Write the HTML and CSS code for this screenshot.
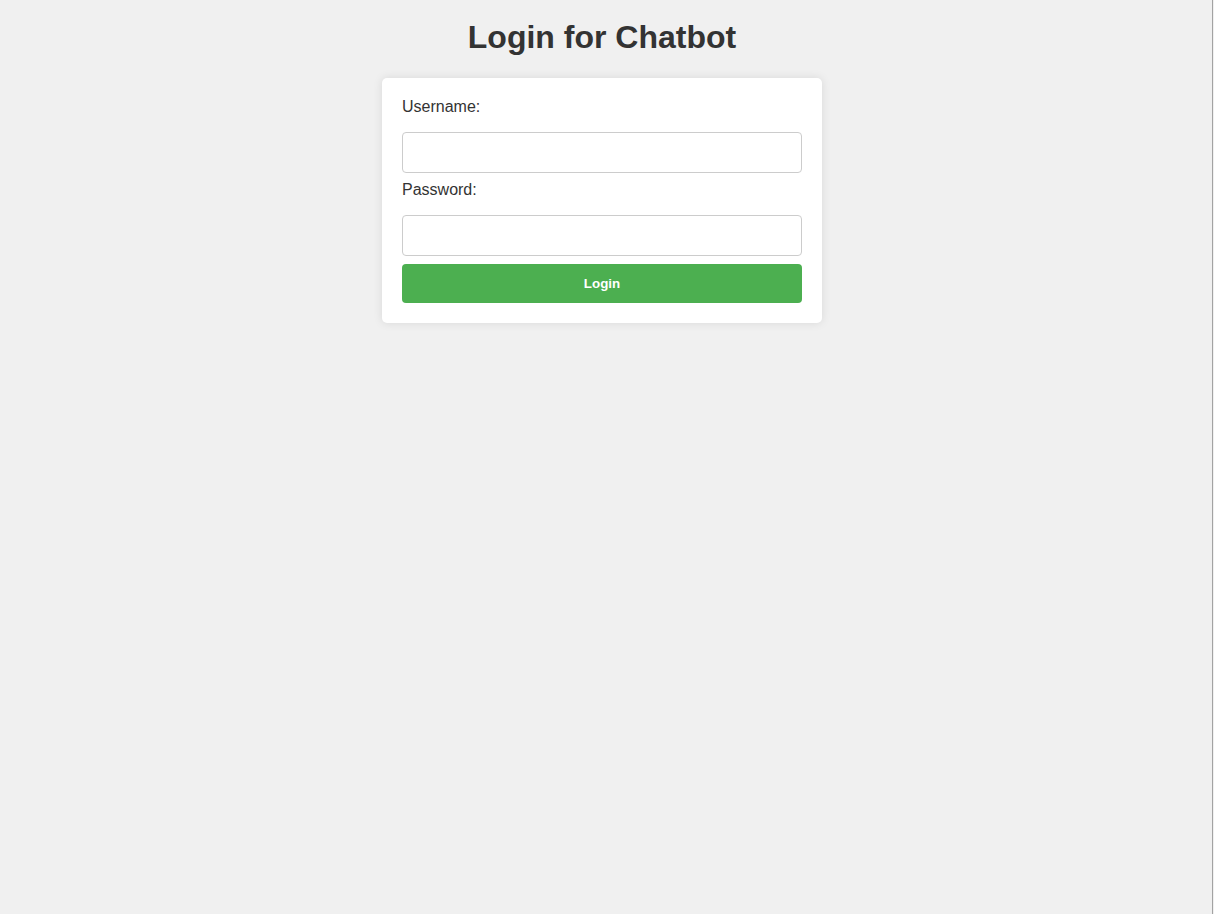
FILE: index.html
```html
<!DOCTYPE html>
<html lang="en">
<head>
<meta charset="utf-8">
<title>Login for Chatbot</title>
<link rel="stylesheet" href="styles.css">
</head>
<body>
  <h1 class="title">Login for Chatbot</h1>
  <form class="card">
    <label class="label" for="username">Username:</label>
    <input class="field" type="text" id="username" name="username">
    <label class="label" for="password">Password:</label>
    <input class="field" type="password" id="password" name="password">
    <button class="btn" type="submit">Login</button>
  </form>
</body>
</html>
```

FILE: styles.css
```css
html {
  background: #f0f0f0;
}

body {
  margin: 0 1px 0 0;
  min-height: 100vh;
  box-sizing: border-box;
  padding: 19px 8px 0 0;
  border-right: 1px solid #a3a3a3;
  font-family: "Liberation Sans", Arial, sans-serif;
  color: #333;
}

.title {
  margin: 0 0 22px;
  font-size: 32px;
  font-weight: bold;
  line-height: 37px;
  text-align: center;
  color: #333;
}

.card {
  width: 440px;
  box-sizing: border-box;
  margin: 0 auto;
  padding: 20px;
  background: #fff;
  border-radius: 5px;
  box-shadow: 0 0 10px rgba(0, 0, 0, 0.1);
  display: flex;
  flex-direction: column;
}

.label {
  font-size: 16px;
  line-height: 18px;
  margin: 0 0 16px;
  color: #333;
}

.field {
  box-sizing: border-box;
  width: 100%;
  height: 41px;
  margin: 0 0 8px;
  padding: 10px;
  border: 1px solid #ccc;
  border-radius: 4px;
  font-family: "Liberation Sans", Arial, sans-serif;
  font-size: 16px;
  background: #fff;
}

.btn {
  height: 39px;
  width: 100%;
  border: none;
  border-radius: 4px;
  background: #4caf50;
  color: #fff;
  font-family: "Liberation Sans", Arial, sans-serif;
  font-size: 13.33px;
  font-weight: bold;
  cursor: pointer;
}
```
